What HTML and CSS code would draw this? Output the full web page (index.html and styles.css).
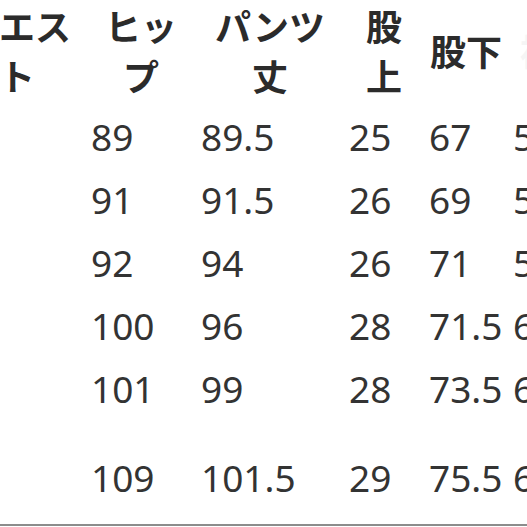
FILE: index.html
```html
<!DOCTYPE html>
<html lang="ja">
<head>
<meta charset="utf-8">
<title>サイズ表</title>
<link rel="stylesheet" href="styles.css">
</head>
<body>
<table class="size-table">
  <colgroup>
    <col class="c1"><col class="c2"><col class="c3"><col class="c4"><col class="c5"><col class="c6">
  </colgroup>
  <thead>
    <tr>
      <th>ウエス<br>ト</th>
      <th>ヒッ<br>プ</th>
      <th>パンツ<br>丈</th>
      <th>股<br>上</th>
      <th>股下</th>
      <th class="faint">裾幅</th>
    </tr>
  </thead>
  <tbody>
    <tr><td></td><td>89</td><td>89.5</td><td>25</td><td>67</td><td>52</td></tr>
    <tr><td></td><td>91</td><td>91.5</td><td>26</td><td>69</td><td>54</td></tr>
    <tr><td></td><td>92</td><td>94</td><td>26</td><td>71</td><td>56</td></tr>
    <tr><td></td><td>100</td><td>96</td><td>28</td><td>71.5</td><td>60</td></tr>
    <tr class="tall"><td></td><td>101</td><td>99</td><td>28</td><td>73.5</td><td>62</td></tr>
    <tr class="last"><td></td><td>109</td><td>101.5</td><td>29</td><td>75.5</td><td>64</td></tr>
  </tbody>
</table>
</body>
</html>
```
FILE: styles.css
```css
html, body {
  margin: 0;
  padding: 0;
  background: #ffffff;
  overflow: hidden;
}

.size-table {
  border-collapse: collapse;
  table-layout: fixed;
  width: 670px;
  margin-left: -52px;
  color: #333333;
}

.c1 { width: 138px; }
.c2 { width: 110px; }
.c3 { width: 148px; }
.c4 { width: 80px; }
.c5 { width: 84px; }
.c6 { width: 110px; }

.size-table th {
  font-family: "Noto Sans CJK JP", "Noto Sans", sans-serif;
  font-weight: 700;
  font-size: 36px;
  line-height: 50px;
  text-align: center;
  vertical-align: middle;
  white-space: nowrap;
  padding: 0 0 5px 0;
  color: #2b2b2b;
}

.size-table th.faint {
  color: #f5f5f5;
  text-align: left;
  padding-left: 12px;
}

.size-table td {
  font-family: "Noto Sans", "Open Sans", sans-serif;
  font-weight: 400;
  font-size: 37px;
  line-height: 63px;
  text-align: left;
  vertical-align: top;
  white-space: nowrap;
  padding: 0 0 0 5px;
}

.size-table tr.tall td {
  padding-bottom: 26px;
}

.size-table tr.last td {
  padding-bottom: 15px;
  border-bottom: 2px solid #8c8c8c;
}
```
